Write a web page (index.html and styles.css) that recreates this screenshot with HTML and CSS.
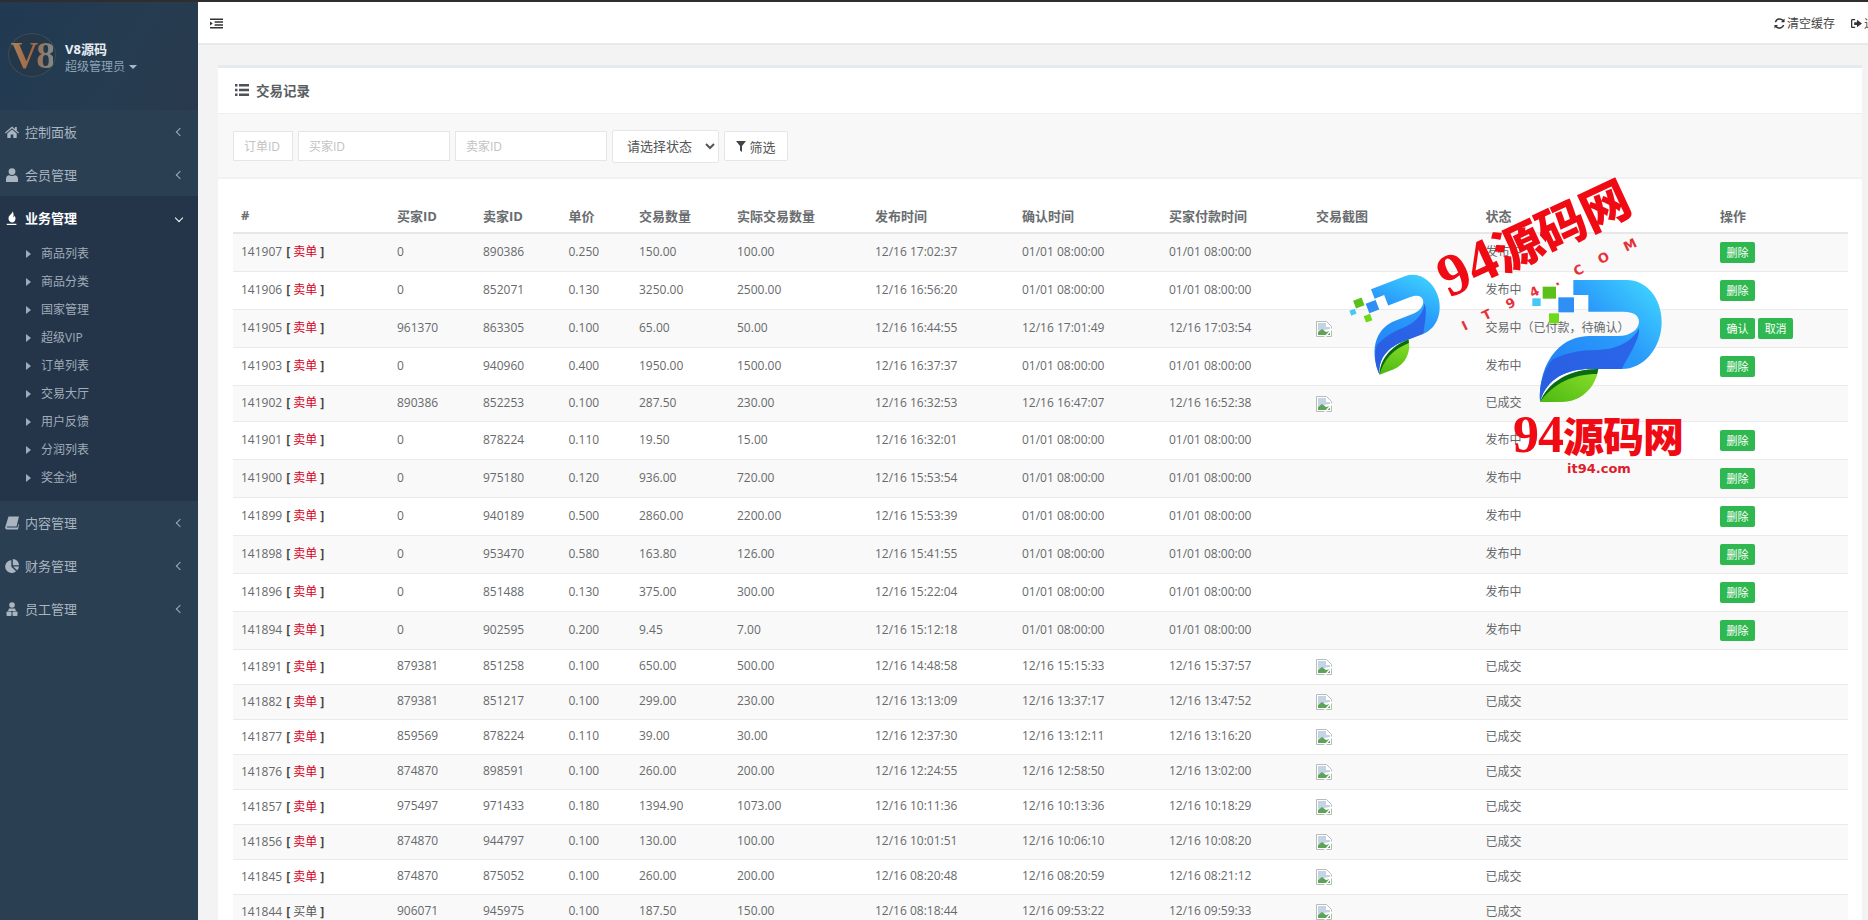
FILE: index.html
```html
<!DOCTYPE html>
<html lang="zh">
<head>
<meta charset="utf-8">
<title>交易记录</title>
<link rel="stylesheet" href="styles.css">
</head>
<body>
<svg class="defs" width="0" height="0" aria-hidden="true">
  <defs>
    <linearGradient id="pTop" x1="0" y1="1" x2="1" y2="0"><stop offset="0" stop-color="#1f79f5"/><stop offset="0.6" stop-color="#2a9bfb"/><stop offset="1" stop-color="#42dcff"/></linearGradient>
    <linearGradient id="pLow" x1="0" y1="1" x2="1" y2="0.2"><stop offset="0" stop-color="#2a5de0"/><stop offset="1" stop-color="#2a66ea"/></linearGradient>
    <linearGradient id="pLeaf" x1="0" y1="1" x2="1" y2="0"><stop offset="0" stop-color="#4cb812"/><stop offset="1" stop-color="#8be02a"/></linearGradient>
    <symbol id="plogo" viewBox="0 0 690 420">
      <path fill="url(#pTop)" d="M250 30H410C470 30 515 85 515 155C515 235 460 297 395 297H300C230 297 170 325 150 395C146 340 163 280 195 245C225 212 260 198 300 198H385C420 198 447 178 447 155C447 135 430 125 400 125H295V75H250Z"/>
      <path fill="url(#pLow)" d="M150 395C146 350 160 300 188 268C225 250 270 240 320 240C370 240 425 220 447 175C450 200 430 235 395 297H300C230 297 170 325 150 395Z"/>
      <path fill="url(#pLeaf)" d="M150 396C175 340 240 297 325 297C318 350 275 396 215 396Z"/>
      <path fill="#0a6b12" d="M150 396C175 335 240 297 325 297L321 312C250 312 190 340 150 396Z"/>
      <rect x="158" y="50" width="40" height="36" fill="#5cc01a"/>
      <rect x="205" y="82" width="47" height="45" fill="#2f8ff5"/>
      <rect x="127" y="85" width="25" height="23" fill="#45c8f5"/>
      <rect x="177" y="130" width="30" height="30" fill="#6fd818"/>
    </symbol>
    <symbol id="i-home" viewBox="0 0 14 12"><path d="M7 .5 0 6.6l.8.9L7 2.2l6.2 5.3.8-.9-2.2-1.9V1h-1.8v2L7 .5ZM2.3 7.4V12h3.4V8.6h2.6V12h3.4V7.4L7 3.4Z"/></symbol>
    <symbol id="i-user" viewBox="0 0 12 14"><circle cx="6" cy="3.6" r="3.4"/><path d="M0 14v-3.2C0 8.6 1.4 7.4 3 7.2c1.7 1.1 4.300 1.100 6 0 1.600.2 3 1.400 3 3.600V14Z"/></symbol>
    <symbol id="i-fire" viewBox="0 0 12 16"><path d="M6.500 0c1 3-4.500 4.500-4.500 8.300C2 11 3.800 13 6 13c2.500 0 4-2 4-4.500 0-1.500-.6-2.600-1.200-3.500-.1 1.200-.6 1.800-1.300 2 .6-2.500.5-5-1-7Z"/><rect x="0" y="14.600" width="11" height="1.400"/></symbol>
    <symbol id="i-book" viewBox="0 0 14 13"><path d="M3.500 0H14l-2.500 10H2.300c-.7 0-.8.900 0 .9h10.200l.9-3.500.6.600-1 5H2C.7 13 0 12 .2 10.800Z"/></symbol>
    <symbol id="i-pie" viewBox="0 0 14 14"><path d="M6.300 1.200V7.700l4.700 4.500A6.400 6.400 0 1 1 6.300 1.200Z"/><path d="M7.800 0A6.300 6.300 0 0 1 14 6.200H7.800Z"/><path d="M8.200 7.500H14a6.500 6.500 0 0 1-2 3.800Z"/></symbol>
    <symbol id="i-staff" viewBox="0 0 14 14"><circle cx="7" cy="3" r="2.800"/><path d="M4 6.400h6l1 2.600H3Z"/><rect x="1.500" y="9.500" width="5" height="4.500" rx="1"/><rect x="7.500" y="9.500" width="5" height="4.500" rx="1"/></symbol>
    <symbol id="i-indent" viewBox="0 0 14 11"><path d="M0 0h14v1.600H0ZM5 3.100h9v1.600H5ZM5 6.200h9v1.600H5ZM0 9.300h14V11H0ZM0 3.300 3 5.500 0 7.700Z"/></symbol>
    <symbol id="i-list" viewBox="0 0 14 12"><path d="M0 0h2.500v2.500H0ZM4 0h10v2.500H4ZM0 4.700h2.500v2.500H0ZM4 4.700h10v2.500H4ZM0 9.400h2.500V12H0ZM4 9.400h10V12H4Z"/></symbol>
    <symbol id="i-refresh" viewBox="0 0 12 12"><path d="M10.200 1.800 11.500.5v4H7.600L9 3.100A4 4 0 0 0 2.400 4.500H.7a5.700 5.700 0 0 1 9.500-2.700ZM1.800 10.200.5 11.500v-4h3.900L3 8.900a4 4 0 0 0 6.600-1.400h1.700a5.700 5.700 0 0 1-9.500 2.700Z"/></symbol>
    <symbol id="i-out" viewBox="0 0 12 12"><path d="M4.500 1H1.500C.7 1 0 1.700 0 2.500v7C0 10.300.7 11 1.500 11h3V9.600H1.400V2.400h3.100Z"/><path d="M6.500 2 12 6l-5.500 4V7.500H3.500v-3h3Z"/></symbol>
    <symbol id="i-filter" viewBox="0 0 10 11"><path d="M0 0h10L6 5v6L4 9.500V5Z"/></symbol>
    <symbol id="i-broken" viewBox="0 0 16 16"><path fill="#fff" stroke="#b8bcb8" d="M.5.500h10l5 5v10H.5Z"/><path fill="#c4d3e6" d="M2 2h8v4h4v2L2 10Z"/><path fill="#5fa35a" d="M2 14V11l4-3 4 3 4-1v4Z"/><path fill="#fff" d="M8 16 16 7v2l-6 7Z"/></symbol>
  </defs>
</svg>

<div class="app">
  <aside class="sidebar">
    <div class="profile">
      <div class="avatar"><span class="avatar-text">V8</span></div>
      <div class="profile-text">
        <div class="profile-name">V8源码</div>
        <div class="profile-role">超级管理员<span class="role-caret"></span></div>
      </div>
    </div>
    <nav class="menu">
      <a class="menu-item"><svg class="mi"><use href="#i-home"/></svg><span class="mt">控制面板</span><span class="chev-left"></span></a>
      <a class="menu-item"><svg class="mi"><use href="#i-user"/></svg><span class="mt">会员管理</span><span class="chev-left"></span></a>
      <div class="menu-group">
        <a class="menu-item active"><svg class="mi"><use href="#i-fire"/></svg><span class="mt">业务管理</span><span class="chev-down"></span></a>
        <ul class="submenu">
          <li><span class="caret-r"></span>商品列表</li>
          <li><span class="caret-r"></span>商品分类</li>
          <li><span class="caret-r"></span>国家管理</li>
          <li><span class="caret-r"></span>超级VIP</li>
          <li><span class="caret-r"></span>订单列表</li>
          <li><span class="caret-r"></span>交易大厅</li>
          <li><span class="caret-r"></span>用户反馈</li>
          <li><span class="caret-r"></span>分润列表</li>
          <li><span class="caret-r"></span>奖金池</li>
        </ul>
      </div>
      <a class="menu-item"><svg class="mi"><use href="#i-book"/></svg><span class="mt">内容管理</span><span class="chev-left"></span></a>
      <a class="menu-item"><svg class="mi"><use href="#i-pie"/></svg><span class="mt">财务管理</span><span class="chev-left"></span></a>
      <a class="menu-item"><svg class="mi"><use href="#i-staff"/></svg><span class="mt">员工管理</span><span class="chev-left"></span></a>
    </nav>
  </aside>

  <main class="main">
    <header class="topbar">
      <svg class="top-toggle"><use href="#i-indent"/></svg>
      <div class="top-actions">
        <span class="top-link"><svg class="top-icon"><use href="#i-refresh"/></svg>清空缓存</span>
        <span class="top-link"><svg class="top-icon"><use href="#i-out"/></svg>退出</span>
      </div>
    </header>
    <section class="content">
      <div class="card">
        <div class="card-title"><svg class="title-icon"><use href="#i-list"/></svg>交易记录</div>
        <form class="filters">
          <input class="field field-s" placeholder="订单ID">
          <input class="field" placeholder="买家ID">
          <input class="field" placeholder="卖家ID">
          <select class="status"><option>请选择状态</option></select>
          <button type="button" class="filter-btn"><svg class="filter-icon"><use href="#i-filter"/></svg>筛选</button>
        </form>
        <div class="table-wrap">
          <table class="records">
            <colgroup>
              <col class="c1"><col class="c2"><col class="c3"><col class="c4"><col class="c5"><col class="c6"><col class="c7"><col class="c8"><col class="c9"><col class="c10"><col class="c11"><col class="c12">
            </colgroup>
            <thead>
              <tr><th>#</th><th>买家ID</th><th>卖家ID</th><th>单价</th><th>交易数量</th><th>实际交易数量</th><th>发布时间</th><th>确认时间</th><th>买家付款时间</th><th>交易截图</th><th>状态</th><th>操作</th></tr>
            </thead>
            <tbody>
              <tr class="tall"><td>141907 <b class="tag">[<i>卖单</i>]</b></td><td>0</td><td>890386</td><td>0.250</td><td>150.00</td><td>100.00</td><td>12/16 17:02:37</td><td>01/01 08:00:00</td><td>01/01 08:00:00</td><td></td><td>发布中</td><td><a class="btn">删除</a></td></tr>
              <tr class="tall"><td>141906 <b class="tag">[<i>卖单</i>]</b></td><td>0</td><td>852071</td><td>0.130</td><td>3250.00</td><td>2500.00</td><td>12/16 16:56:20</td><td>01/01 08:00:00</td><td>01/01 08:00:00</td><td></td><td>发布中</td><td><a class="btn">删除</a></td></tr>
              <tr class="tall"><td>141905 <b class="tag">[<i>卖单</i>]</b></td><td>961370</td><td>863305</td><td>0.100</td><td>65.00</td><td>50.00</td><td>12/16 16:44:55</td><td>12/16 17:01:49</td><td>12/16 17:03:54</td><td><svg class="shot"><use href="#i-broken"/></svg></td><td>交易中（已付款，待确认）</td><td><a class="btn">确认</a> <a class="btn">取消</a></td></tr>
              <tr class="tall"><td>141903 <b class="tag">[<i>卖单</i>]</b></td><td>0</td><td>940960</td><td>0.400</td><td>1950.00</td><td>1500.00</td><td>12/16 16:37:37</td><td>01/01 08:00:00</td><td>01/01 08:00:00</td><td></td><td>发布中</td><td><a class="btn">删除</a></td></tr>
              <tr class="mid"><td>141902 <b class="tag">[<i>卖单</i>]</b></td><td>890386</td><td>852253</td><td>0.100</td><td>287.50</td><td>230.00</td><td>12/16 16:32:53</td><td>12/16 16:47:07</td><td>12/16 16:52:38</td><td><svg class="shot"><use href="#i-broken"/></svg></td><td>已成交</td><td></td></tr>
              <tr class="tall"><td>141901 <b class="tag">[<i>卖单</i>]</b></td><td>0</td><td>878224</td><td>0.110</td><td>19.50</td><td>15.00</td><td>12/16 16:32:01</td><td>01/01 08:00:00</td><td>01/01 08:00:00</td><td></td><td>发布中</td><td><a class="btn">删除</a></td></tr>
              <tr class="tall"><td>141900 <b class="tag">[<i>卖单</i>]</b></td><td>0</td><td>975180</td><td>0.120</td><td>936.00</td><td>720.00</td><td>12/16 15:53:54</td><td>01/01 08:00:00</td><td>01/01 08:00:00</td><td></td><td>发布中</td><td><a class="btn">删除</a></td></tr>
              <tr class="tall"><td>141899 <b class="tag">[<i>卖单</i>]</b></td><td>0</td><td>940189</td><td>0.500</td><td>2860.00</td><td>2200.00</td><td>12/16 15:53:39</td><td>01/01 08:00:00</td><td>01/01 08:00:00</td><td></td><td>发布中</td><td><a class="btn">删除</a></td></tr>
              <tr class="tall"><td>141898 <b class="tag">[<i>卖单</i>]</b></td><td>0</td><td>953470</td><td>0.580</td><td>163.80</td><td>126.00</td><td>12/16 15:41:55</td><td>01/01 08:00:00</td><td>01/01 08:00:00</td><td></td><td>发布中</td><td><a class="btn">删除</a></td></tr>
              <tr class="tall"><td>141896 <b class="tag">[<i>卖单</i>]</b></td><td>0</td><td>851488</td><td>0.130</td><td>375.00</td><td>300.00</td><td>12/16 15:22:04</td><td>01/01 08:00:00</td><td>01/01 08:00:00</td><td></td><td>发布中</td><td><a class="btn">删除</a></td></tr>
              <tr class="tall"><td>141894 <b class="tag">[<i>卖单</i>]</b></td><td>0</td><td>902595</td><td>0.200</td><td>9.45</td><td>7.00</td><td>12/16 15:12:18</td><td>01/01 08:00:00</td><td>01/01 08:00:00</td><td></td><td>发布中</td><td><a class="btn">删除</a></td></tr>
              <tr><td>141891 <b class="tag">[<i>卖单</i>]</b></td><td>879381</td><td>851258</td><td>0.100</td><td>650.00</td><td>500.00</td><td>12/16 14:48:58</td><td>12/16 15:15:33</td><td>12/16 15:37:57</td><td><svg class="shot"><use href="#i-broken"/></svg></td><td>已成交</td><td></td></tr>
              <tr><td>141882 <b class="tag">[<i>卖单</i>]</b></td><td>879381</td><td>851217</td><td>0.100</td><td>299.00</td><td>230.00</td><td>12/16 13:13:09</td><td>12/16 13:37:17</td><td>12/16 13:47:52</td><td><svg class="shot"><use href="#i-broken"/></svg></td><td>已成交</td><td></td></tr>
              <tr><td>141877 <b class="tag">[<i>卖单</i>]</b></td><td>859569</td><td>878224</td><td>0.110</td><td>39.00</td><td>30.00</td><td>12/16 12:37:30</td><td>12/16 13:12:11</td><td>12/16 13:16:20</td><td><svg class="shot"><use href="#i-broken"/></svg></td><td>已成交</td><td></td></tr>
              <tr><td>141876 <b class="tag">[<i>卖单</i>]</b></td><td>874870</td><td>898591</td><td>0.100</td><td>260.00</td><td>200.00</td><td>12/16 12:24:55</td><td>12/16 12:58:50</td><td>12/16 13:02:00</td><td><svg class="shot"><use href="#i-broken"/></svg></td><td>已成交</td><td></td></tr>
              <tr><td>141857 <b class="tag">[<i>卖单</i>]</b></td><td>975497</td><td>971433</td><td>0.180</td><td>1394.90</td><td>1073.00</td><td>12/16 10:11:36</td><td>12/16 10:13:36</td><td>12/16 10:18:29</td><td><svg class="shot"><use href="#i-broken"/></svg></td><td>已成交</td><td></td></tr>
              <tr><td>141856 <b class="tag">[<i>卖单</i>]</b></td><td>874870</td><td>944797</td><td>0.100</td><td>130.00</td><td>100.00</td><td>12/16 10:01:51</td><td>12/16 10:06:10</td><td>12/16 10:08:20</td><td><svg class="shot"><use href="#i-broken"/></svg></td><td>已成交</td><td></td></tr>
              <tr><td>141845 <b class="tag">[<i>卖单</i>]</b></td><td>874870</td><td>875052</td><td>0.100</td><td>260.00</td><td>200.00</td><td>12/16 08:20:48</td><td>12/16 08:20:59</td><td>12/16 08:21:12</td><td><svg class="shot"><use href="#i-broken"/></svg></td><td>已成交</td><td></td></tr>
              <tr><td>141844 <b class="tag buy">[<i>买单</i>]</b></td><td>906071</td><td>945975</td><td>0.100</td><td>187.50</td><td>150.00</td><td>12/16 08:18:44</td><td>12/16 09:53:22</td><td>12/16 09:59:33</td><td><svg class="shot"><use href="#i-broken"/></svg></td><td>已成交</td><td></td></tr>
            </tbody>
          </table>
        </div>
      </div>
    </section>
  </main>
</div>

<div class="wm wm-logo-a"><svg class="wm-svg"><use href="#plogo"/></svg></div>
<div class="wm wm-logo-b"><svg class="wm-svg"><use href="#plogo"/></svg></div>
<div class="wm wm-tilt"><span class="wm-num">94</span>源码网</div>
<div class="wm wm-tilt-sub">IT94.COM</div>
<div class="wm wm-flat"><span class="wm-num">94</span>源码网</div>
<div class="wm wm-url">it94.com</div>
</body>
</html>
```
FILE: styles.css
```css
* { box-sizing: border-box; }
html, body { margin: 0; height: 100%; overflow: hidden; }
body {
  position: relative;
  font-family: "Open Sans", "Noto Sans CJK SC", sans-serif;
  font-size: 12px;
  color: #676a6c;
  background: #f3f3f4;
}
.defs { position: absolute; }
.app { display: flex; height: 920px; border-top: 2px solid #2e2e2e; }

/* sidebar */
.sidebar {
  width: 198px;
  flex: none;
  background: #2b3f52;
  color: #a7b1c2;
}
.profile {
  height: 108px;
  display: flex;
  align-items: center;
  gap: 9px;
  padding: 4px 0 0 8px;
  background: linear-gradient(120deg, #203a52 0%, #263c50 60%, #29394d 100%);
}
.avatar {
  width: 48px;
  height: 44px;
  margin-bottom: 6px;
  border-radius: 50%;
  border: 1px solid #3f4b57;
  display: flex;
  align-items: center;
  justify-content: center;
  background: #25384a;
}
.avatar-text {
  font-family: "Liberation Serif", serif;
  font-weight: bold;
  font-size: 38px;
  line-height: 1;
  letter-spacing: -2px;
  background: linear-gradient(90deg, #a6825c 0%, #a5663f 50%, #7c8b8b 100%);
  -webkit-background-clip: text;
  background-clip: text;
  color: transparent;
}
.profile-name { font-size: 13px; line-height: 18px; font-weight: bold; color: #e6edf3; }
.profile-role { font-size: 12px; line-height: 18px; color: #8fa3b6; }
.role-caret {
  display: inline-block;
  margin-left: 4px;
  vertical-align: 2px;
  border: 4px solid transparent;
  border-top-color: #aab8c5;
  border-bottom: 0;
}
.menu-item {
  height: 43px;
  display: flex;
  align-items: center;
  padding: 0 15px 0 5px;
  font-size: 13px;
  color: #a9b5c1;
}
.mi {
  width: 14px;
  height: 14px;
  margin-right: 6px;
  flex: none;
  fill: #a9b5c1;
}
.mt { flex: 1; }
.menu-group { background: #24354a; padding-bottom: 9px; }
.menu-item.active { color: #fff; font-weight: bold; }
.menu-item.active .mi { fill: #fff; }
.chev-left, .chev-down {
  width: 6px;
  height: 6px;
  border-left: 1.500px solid #9eabb8;
  border-bottom: 1.500px solid #9eabb8;
  transform: rotate(45deg);
}
.chev-down {
  border-color: #fff;
  transform: rotate(-45deg);
  margin-right: 1px;
}
.submenu { list-style: none; margin: 0; padding: 1px 0 0; }
.submenu li {
  height: 28px;
  line-height: 28px;
  display: flex;
  align-items: center;
  padding-left: 26px;
  color: #a0acb9;
}
.caret-r {
  border: 4px solid transparent;
  border-left: 5px solid #9eabb8;
  border-right: 0;
  margin-right: 10px;
}

/* top */
.main { flex: 1; min-width: 0; display: flex; flex-direction: column; }
.topbar {
  height: 43px;
  flex: none;
  background: #fff;
  border-bottom: 2px solid #e9e9ea;
  display: flex;
  align-items: center;
  justify-content: space-between;
  padding: 1px 0 0 12px;
}
.top-toggle { width: 13px; height: 11px; fill: #333; }
.top-actions { display: flex; gap: 16px; margin-right: -20px; color: #444; }
.top-link { display: flex; align-items: center; gap: 2px; }
.top-icon { width: 11px; height: 11px; fill: #333; }

/* card */
.content { flex: 1; padding: 20px 6px 0 20px; min-height: 0; overflow: hidden; }
.card { background: #fff; border-top: 3px solid #e7eaec; }
.card-title {
  height: 46px;
  display: flex;
  align-items: center;
  padding: 0 0 2px 17px;
  font-size: 13.500px;
  font-weight: bold;
  color: #5a5e61;
  border-bottom: 1px solid #eeeeee;
}
.title-icon { width: 14px; height: 12px; margin-right: 7px; fill: #4d5256; }
.filters {
  height: 65px;
  background: #f8f8f8;
  display: flex;
  align-items: center;
  gap: 5px;
  padding: 1px 0 0 15px;
  border-bottom: 2px solid #f2f2f2;
}
.field {
  width: 152px;
  height: 30px;
  padding: 0 10px;
  border: 1px solid #e5e6e7;
  background: #fff;
  font: inherit;
  color: #676a6c;
}
.field-s { width: 60px; }
.field::placeholder { color: #c2c2c2; }
.status {
  width: 107px;
  height: 33px;
  padding-left: 10px;
  border: 1px solid #e5e6e7;
  border-radius: 2px;
  background: #fff;
  font: inherit;
  font-size: 13px;
  color: #555;
}
.filter-btn {
  width: 64px;
  height: 30px;
  padding: 0;
  border: 1px solid #e5e6e7;
  border-radius: 2px;
  background: #fff;
  font: inherit;
  font-size: 13px;
  color: #555;
  display: flex;
  align-items: center;
  justify-content: center;
  gap: 3px;
}
.filter-icon { width: 10px; height: 11px; fill: #444; }

/* table */
.table-wrap { padding: 21px 14px 0 15px; }
.records { width: 1615px; table-layout: fixed; border-collapse: collapse; }
.c1 { width: 156px; } .c2 { width: 86px; } .c3 { width: 85.500px; } .c4 { width: 70.500px; }
.c5 { width: 98px; } .c6 { width: 138px; } .c7 { width: 147px; } .c8 { width: 147px; }
.c9 { width: 147px; } .c10 { width: 169.500px; } .c11 { width: 234.500px; } .c12 { width: 136px; }
.records th {
  height: 33px;
  padding: 0 8px 2px;
  text-align: left;
  font-size: 13px;
  font-weight: bold;
  color: #6a6d6f;
  border-bottom: 2px solid #e7e7e7;
}
.records td {
  padding: 0 8px 2px;
  white-space: nowrap;
  border-top: 1px solid #eaeaea;
}
.records td:last-child { padding-bottom: 0; }
.records tbody tr { height: 35px; }
.records tbody tr.tall { height: 38px; }
.records tbody tr.mid { height: 36px; }
.records tbody tr:nth-child(odd) { background: #f9f9f9; }
.tag { font-style: normal; color: #444; margin-left: 1px; }
.tag i { font-style: normal; font-weight: normal; color: #d9001b; margin: 0 3px; }
.tag.buy i { color: #555; }
.btn {
  display: inline-block;
  width: 35px;
  height: 21px;
  line-height: 21px;
  text-align: center;
  font-size: 11px;
  color: #fff;
  background: #2eb84f;
  border-radius: 2px;
  vertical-align: middle;
}
.shot { width: 16px; height: 16px; display: block; margin-top: 3px; }

/* watermark overlays */
.wm { position: absolute; pointer-events: none; white-space: nowrap; }
.wm-svg { display: block; width: 230px; height: 140px; }
.wm-logo-b { left: 1490px; top: 270px; }
.wm-logo-a { left: 1293px; top: 250px; transform: rotate(-21deg) scale(.68); transform-origin: 110px 72px; }
.wm-tilt, .wm-flat {
  font-family: "Noto Sans CJK SC", sans-serif;
  font-weight: 900;
  color: #ef0a14;
  line-height: 1;
}
.wm-num { font-family: "Liberation Serif", serif; font-weight: bold; }
.wm-tilt {
  left: 1431px;
  top: 207px;
  font-size: 49px;
  letter-spacing: -1px;
  transform: rotate(-25deg);
}
.wm-tilt .wm-num { font-size: 60px; letter-spacing: 0; }
.wm-flat {
  left: 1513px;
  top: 409px;
  font-size: 41px;
  letter-spacing: -1px;
}
.wm-flat .wm-num { font-size: 52px; }
.wm-tilt-sub {
  left: 1452px;
  top: 273px;
  font-family: "DejaVu Sans", sans-serif;
  font-size: 13px;
  font-weight: bold;
  color: #e8303a;
  letter-spacing: 17.500px;
  transform: rotate(-26deg);
}
.wm-url {
  left: 1567px;
  top: 461px;
  font-family: "DejaVu Sans", sans-serif;
  font-size: 13px;
  font-weight: bold;
  color: #dc1f2d;
}
```
